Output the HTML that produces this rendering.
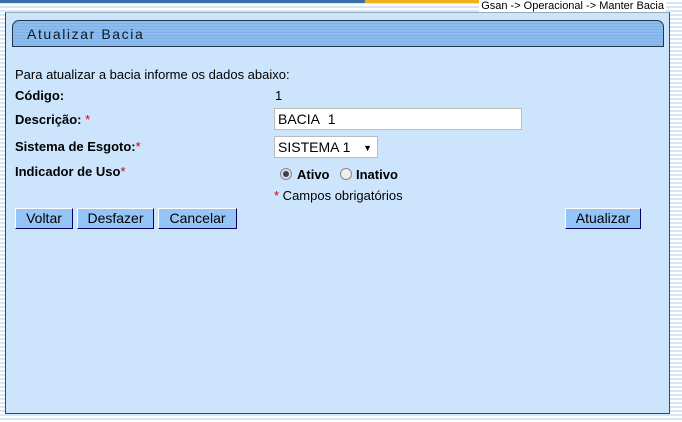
<!DOCTYPE html>
<html><head><meta charset="utf-8"><style>
body{margin:0;width:682px;height:422px;overflow:hidden;position:relative;font-family:"Liberation Sans",Arial,sans-serif;font-size:13px;color:#000;
background:repeating-linear-gradient(to bottom,#ffffff 0,#ffffff 2px,#d6e6f5 2px,#d6e6f5 4px);}
.topl{position:absolute;left:0;top:0;width:365px;height:3px;background:#3a6ea8}
.topr{position:absolute;left:365px;top:0;width:148px;height:3px;background:#f0b020}
.crumb{position:absolute;right:16px;top:0px;font-size:11px;color:#000;background:#fff;padding:0 2px}
.panel{position:absolute;left:5px;top:12px;width:663px;height:400px;background:#cce5fc;border:1px solid #2f4a66;border-top-color:#9ab}
.hdr{position:absolute;left:12px;top:20px;width:650px;height:25px;border:1px solid #22364d;border-radius:7px 7px 0 0;
background:repeating-linear-gradient(to bottom,#8cbcee 0,#8cbcee 2px,#7eb2e8 2px,#7eb2e8 3px);}
.hdr span{position:absolute;left:14px;top:5px;font-size:14px;letter-spacing:1.6px;color:#0a1a2a}
.t{position:absolute;white-space:nowrap}
b{font-weight:bold}
.r{color:#c00}
.inp{position:absolute;background:#fff;border:1px solid #bbb;font-size:14px;padding-left:3px;box-sizing:border-box}
.btn{position:absolute;height:21px;background:#95c5f7;border:1px solid #000066;border-top-color:#fff;border-left-color:#fff;box-sizing:border-box;font-size:14px;text-align:center;line-height:19px}
.rad{position:absolute;width:10px;height:10px;border-radius:50%;border:1px solid #888;background:#eee}
</style></head><body>
<div class="topl"></div><div class="topr"></div>
<div class="crumb">Gsan -&gt; Operacional -&gt; Manter Bacia</div>
<div class="panel"></div>
<div class="hdr"><span>Atualizar Bacia</span></div>
<div class="t" style="left:15px;top:67px">Para atualizar a bacia informe os dados abaixo:</div>
<div class="t" style="left:15px;top:88px"><b>Código:</b></div>
<div class="t" style="left:275px;top:88px">1</div>
<div class="t" style="left:15px;top:112px"><b>Descrição:</b> <span class="r">*</span></div>
<div class="inp" style="left:274px;top:108px;width:248px;height:22px;line-height:20px">BACIA&nbsp; 1</div>
<div class="t" style="left:15px;top:139px"><b>Sistema de Esgoto:</b><span class="r">*</span></div>
<div class="inp" style="left:274px;top:136px;width:104px;height:22px;line-height:20px">SISTEMA 1 <span style="font-size:9px;position:absolute;right:5px;top:1px">▼</span></div>
<div class="t" style="left:15px;top:164px"><b>Indicador de Uso</b><span class="r">*</span></div>
<div class="rad" style="left:280px;top:168px;background:#dde"><div style="position:absolute;left:2px;top:2px;width:6px;height:6px;border-radius:50%;background:#345"></div></div>
<div class="t" style="left:297px;top:167px;font-size:13px"><b>Ativo</b></div>
<div class="rad" style="left:340px;top:168px"></div>
<div class="t" style="left:356px;top:167px;font-size:13px"><b>Inativo</b></div>
<div class="t" style="left:274px;top:188px"><span class="r">*</span> Campos obrigatórios</div>
<div class="btn" style="left:15px;top:208px;width:58px">Voltar</div>
<div class="btn" style="left:77px;top:208px;width:77px">Desfazer</div>
<div class="btn" style="left:158px;top:208px;width:79px">Cancelar</div>
<div class="btn" style="left:565px;top:208px;width:76px">Atualizar</div>
</body></html>
